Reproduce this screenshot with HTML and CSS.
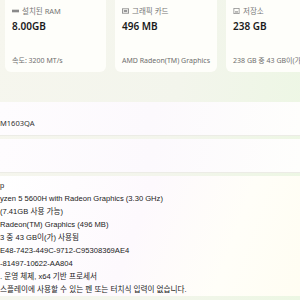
FILE: index.html
```html
<!DOCTYPE html>
<html lang="ko">
<head>
    <meta charset="UTF-8">
    <meta name="viewport" content="width=device-width, initial-scale=1.0">
    <title>정보</title>
    <link rel="stylesheet" href="styles.css">
</head>
<body>

<div class="page">
    <div class="cards">
        <div class="card">
            <div class="card-label">
                <svg class="icon" viewBox="0 0 8 6"><rect x="0" y="1.5" width="8" height="3" fill="#8a8a8a"/></svg>
                설치된 RAM
            </div>
            <div class="card-value">8.00GB</div>
            <div class="card-foot">속도: 3200 MT/s</div>
        </div>
        <div class="card">
            <div class="card-label">
                <svg class="icon" viewBox="0 0 8 6"><rect x="0.5" y="0.5" width="7" height="5" fill="none" stroke="#8a8a8a"/><rect x="2" y="2" width="4" height="2" fill="#8a8a8a"/></svg>
                그래픽 카드
            </div>
            <div class="card-value">496 MB</div>
            <div class="card-foot">AMD Radeon(TM) Graphics</div>
        </div>
        <div class="card">
            <div class="card-label">
                <svg class="icon" viewBox="0 0 8 8"><rect x="0.5" y="0.5" width="7" height="7" fill="none" stroke="#8a8a8a"/><rect x="2" y="4.5" width="4" height="1.5" fill="#8a8a8a"/></svg>
                저장소
            </div>
            <div class="card-value">238 GB</div>
            <div class="card-foot">238 GB 중 43 GB이(가) 사용됨</div>
        </div>
    </div>

    <div class="rows">
        <div class="row">M1603QA</div>
        <div class="row"></div>
        <div class="row specs">
            <div class="line">p</div>
            <div class="line">yzen 5 5600H with Radeon Graphics (3.30 GHz)</div>
            <div class="line">(7.41GB 사용 가능)</div>
            <div class="line">Radeon(TM) Graphics (496 MB)</div>
            <div class="line">3 중 43 GB이(가) 사용됨</div>
            <div class="line">E48-7423-449C-9712-C95308369AE4</div>
            <div class="line">-81497-10622-AA804</div>
            <div class="line">. 운영 체제, x64 기반 프로세서</div>
            <div class="line">스플레이에 사용할 수 있는 펜 또는 터치식 입력이 없습니다.</div>
        </div>
    </div>
</div>

</body>
</html>
```

FILE: styles.css
```css
body {
    margin: 0;
    padding: 0;
    overflow: hidden;
    font-family: "Noto Sans", "Noto Sans CJK KR", sans-serif;
    color: #1f1f1f;
    background: linear-gradient(100deg, #f6f6ee 0%, #f3f5ec 55%, #ecf7e3 100%);
}

.page {
    width: 300px;
    height: 300px;
    overflow: hidden;
}

.cards {
    display: flex;
    gap: 9px;
    padding-left: 5px;
    margin-top: -6px;
}

.card {
    flex: 0 0 101px;
    height: 78px;
    box-sizing: border-box;
    padding: 12px 7px 6px;
    background: #fefefa;
    border-radius: 6px;
    display: flex;
    flex-direction: column;
}

.card-label {
    display: flex;
    align-items: center;
    gap: 3px;
    font-size: 7.5px;
    line-height: 10px;
    color: #767676;
}

.icon {
    width: 7px;
    height: 6px;
}

.card-value {
    margin-top: 4px;
    font-size: 10px;
    font-weight: 600;
    line-height: 12px;
    color: #1a1a1a;
}

.card-foot {
    margin-top: auto;
    font-size: 7px;
    line-height: 10px;
    color: #6e6e6e;
    white-space: nowrap;
}

.rows {
    margin-top: 30px;
    display: flex;
    flex-direction: column;
    gap: 3px;
}

.row {
    height: 34px;
    box-sizing: border-box;
    padding-top: 16px;
    font-size: 7.5px;
    line-height: 10px;
    color: #333;
    background: linear-gradient(100deg, #fefcfe 0%, #fcf9fd 50%, #fefefc 100%);
    border-bottom: 1px solid #ecece6;
}

.row.specs {
    height: auto;
    padding-top: 3px;
    border-bottom: none;
    font-family: "Liberation Sans", "Noto Sans CJK KR", sans-serif;
    background: linear-gradient(110deg, #ffffff 0%, #fdf9fd 45%, #fffef8 75%, #fffdf2 100%);
}

.line {
    font-size: 7.6px;
    line-height: 13px;
    color: #222;
    white-space: nowrap;
}
```
